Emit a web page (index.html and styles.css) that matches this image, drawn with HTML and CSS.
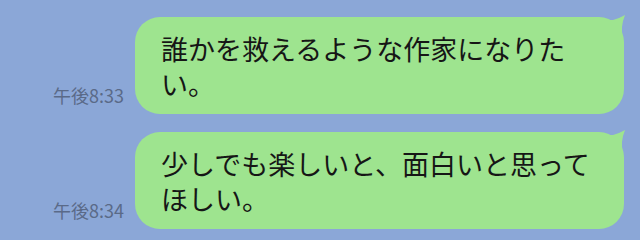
FILE: index.html
```html
<!DOCTYPE html>
<html lang="ja">
<head>
    <meta charset="UTF-8">
    <meta name="viewport" content="width=device-width, initial-scale=1.0">
    <title>トーク</title>
    <link rel="stylesheet" href="styles.css">
</head>
<body>
    <div class="talk">
        <div class="row">
            <span class="time">午後8:33</span>
            <div class="bubble">誰かを救えるような作家になりた<br>い。</div>
        </div>
        <div class="row">
            <span class="time">午後8:34</span>
            <div class="bubble">少しでも楽しいと、面白いと思って<br>ほしい。</div>
        </div>
    </div>
</body>
</html>
```

FILE: styles.css
```css
body {
    margin: 0;
    height: 240px;
    overflow: hidden;
    background-color: #8ba7d7;
    font-family: "Noto Sans CJK JP", "Noto Sans", sans-serif;
}
.talk {
    display: flex;
    flex-direction: column;
    gap: 18px;
    padding: 17px 16px 0 0;
}
.row {
    display: flex;
    justify-content: flex-end;
    align-items: flex-end;
    gap: 11px;
}
.time {
    font-size: 18px;
    line-height: 20px;
    color: #5a6a88;
    margin-bottom: 9px;
}
.bubble {
    position: relative;
    box-sizing: border-box;
    width: 489px;
    padding: 14px 10px 13px 26px;
    background-color: #9ee48f;
    border-radius: 25px;
    font-size: 27px;
    line-height: 35px;
    color: #161616;
}
.bubble::after {
    content: "";
    position: absolute;
    top: -2px;
    right: -1px;
    width: 20px;
    height: 26px;
    background-color: #9ee48f;
    clip-path: polygon(0 5px, 8px 5px, 14px 3px, 20px 0, 18px 6px, 17px 12px, 17px 26px, 0 26px);
}
```
